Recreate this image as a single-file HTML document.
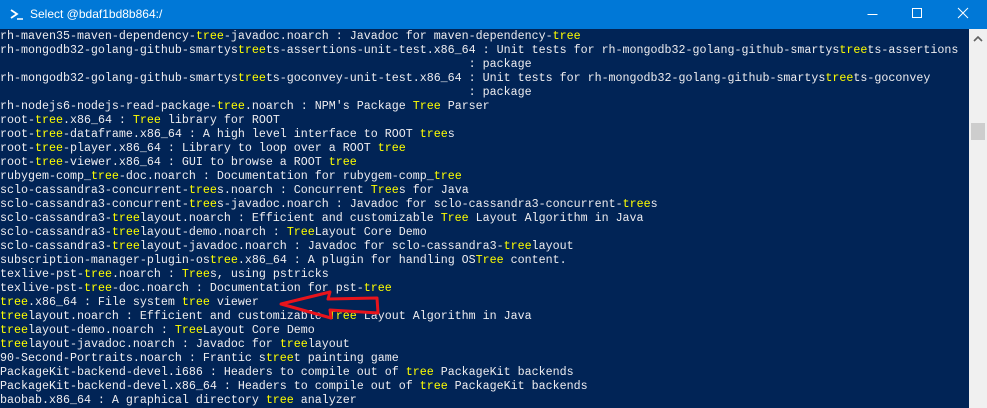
<!DOCTYPE html><html><head><style>
body{margin:0;width:987px;height:408px;overflow:hidden;background:#012456;position:relative}
#t{position:absolute;left:0;top:0;width:987px;height:29px;background:#0078d7;color:#fff;font:12px "Liberation Sans",sans-serif}
#t .ti{position:absolute;left:30px;top:7px}
#c{position:absolute;left:0;top:29px;width:969px;font:11.67px/14px "Liberation Mono",monospace;color:#eeedf0;white-space:pre}
b{font-weight:normal;color:#ffff00}
#sb{position:absolute;left:969px;top:29px;width:18px;height:379px;background:#f0f0f0}
#th{position:absolute;left:971px;top:123px;width:14px;height:17px;background:#cdcdcd}
</style></head><body>
<div id="t"><svg style="position:absolute;left:10px;top:9px" width="14" height="11"><rect width="14" height="11" fill="#fff" opacity="0"/><path d="M1 1L7 5L1 9" stroke="#fff" stroke-width="1.8" fill="none"/><path d="M7 10H13" stroke="#fff" stroke-width="1.5"/></svg><span class="ti">Select @bdaf1bd8b864:/</span>
<svg style="position:absolute;left:860px;top:0" width="127" height="29" fill="none" stroke="#fff" stroke-width="1"><path d="M7.5 14.5H17.5"/><rect x="52.5" y="8.5" width="9" height="9"/><path d="M98 8L108 18M108 8L98 18"/></svg></div>
<div id="c">rh-maven35-maven-dependency-<b>tree</b>-javadoc.noarch : Javadoc for maven-dependency-<b>tree</b>
rh-mongodb32-golang-github-smartys<b>tree</b>ts-assertions-unit-test.x86_64 : Unit tests for rh-mongodb32-golang-github-smartys<b>tree</b>ts-assertions
                                                                   : package
rh-mongodb32-golang-github-smartys<b>tree</b>ts-goconvey-unit-test.x86_64 : Unit tests for rh-mongodb32-golang-github-smartys<b>tree</b>ts-goconvey
                                                                   : package
rh-nodejs6-nodejs-read-package-<b>tree</b>.noarch : NPM's Package <b>Tree</b> Parser
root-<b>tree</b>.x86_64 : <b>Tree</b> library for ROOT
root-<b>tree</b>-dataframe.x86_64 : A high level interface to ROOT <b>tree</b>s
root-<b>tree</b>-player.x86_64 : Library to loop over a ROOT <b>tree</b>
root-<b>tree</b>-viewer.x86_64 : GUI to browse a ROOT <b>tree</b>
rubygem-comp_<b>tree</b>-doc.noarch : Documentation for rubygem-comp_<b>tree</b>
sclo-cassandra3-concurrent-<b>tree</b>s.noarch : Concurrent <b>Tree</b>s for Java
sclo-cassandra3-concurrent-<b>tree</b>s-javadoc.noarch : Javadoc for sclo-cassandra3-concurrent-<b>tree</b>s
sclo-cassandra3-<b>tree</b>layout.noarch : Efficient and customizable <b>Tree</b> Layout Algorithm in Java
sclo-cassandra3-<b>tree</b>layout-demo.noarch : <b>Tree</b>Layout Core Demo
sclo-cassandra3-<b>tree</b>layout-javadoc.noarch : Javadoc for sclo-cassandra3-<b>tree</b>layout
subscription-manager-plugin-os<b>tree</b>.x86_64 : A plugin for handling OS<b>Tree</b> content.
texlive-pst-<b>tree</b>.noarch : <b>Tree</b>s, using pstricks
texlive-pst-<b>tree</b>-doc.noarch : Documentation for pst-<b>tree</b>
<b>tree</b>.x86_64 : File system <b>tree</b> viewer
<b>tree</b>layout.noarch : Efficient and customizable <b>Tree</b> Layout Algorithm in Java
<b>tree</b>layout-demo.noarch : <b>Tree</b>Layout Core Demo
<b>tree</b>layout-javadoc.noarch : Javadoc for <b>tree</b>layout
90-Second-Portraits.noarch : Frantic s<b>tree</b>t painting game
PackageKit-backend-devel.i686 : Headers to compile out of <b>tree</b> PackageKit backends
PackageKit-backend-devel.x86_64 : Headers to compile out of <b>tree</b> PackageKit backends
baobab.x86_64 : A graphical directory <b>tree</b> analyzer</div>
<svg style="position:absolute;left:0;top:0" width="987" height="408"><polygon points="281,304 330,292 328,299 377,298 378,313 330,310 331,318" fill="none" stroke="#e8141c" stroke-width="3" stroke-linejoin="round"/></svg>
<div id="sb"><svg style="position:absolute;left:4px;top:7px" width="10" height="6"><path d="M1 5L5 1L9 5" stroke="#606060" stroke-width="1.6" fill="none"/></svg></div><div id="th"></div>
</body></html>
